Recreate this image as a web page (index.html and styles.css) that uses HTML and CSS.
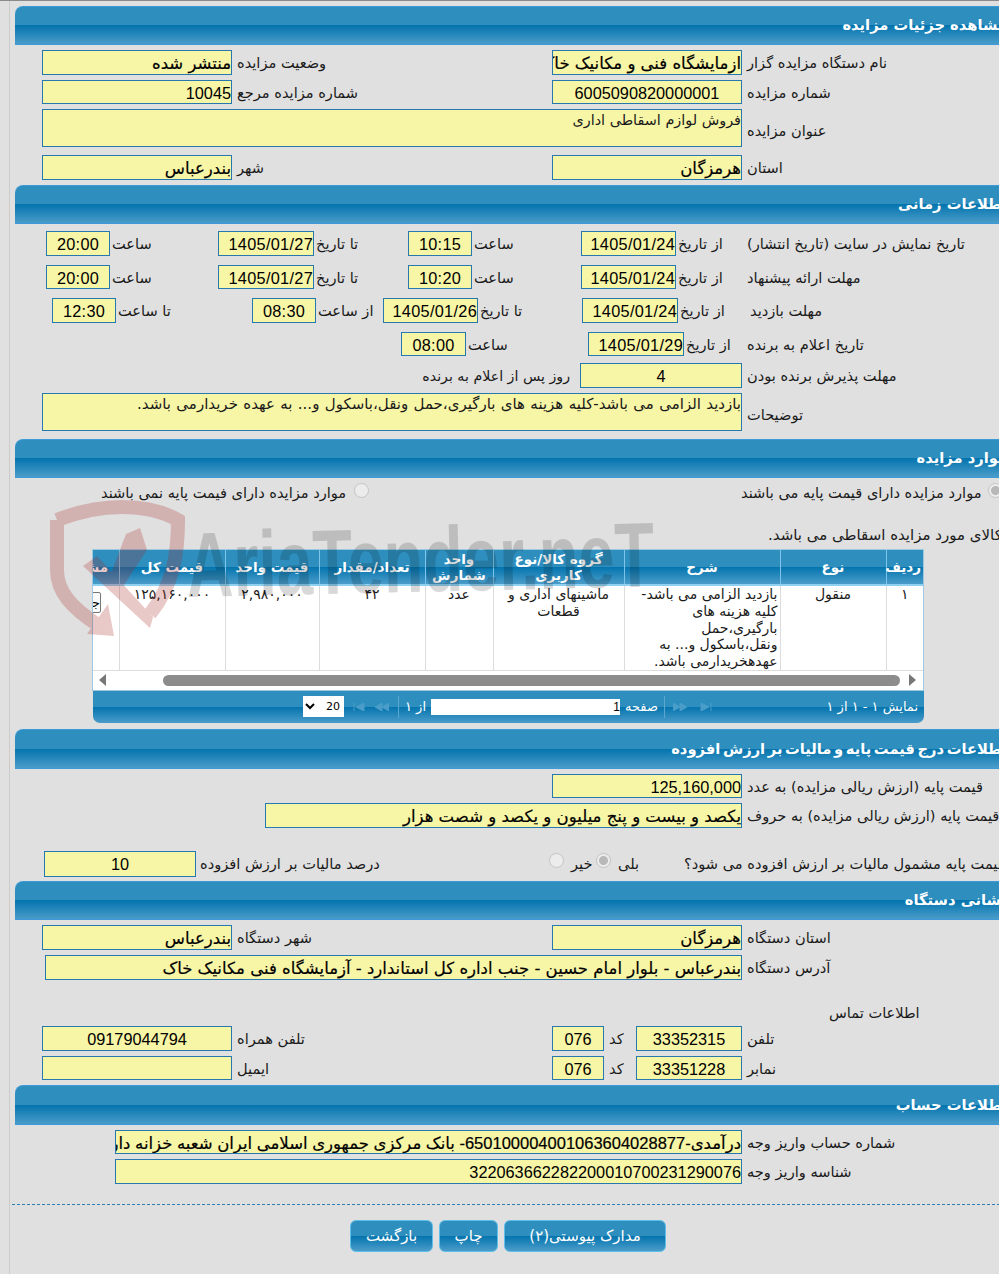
FILE: index.html
```html
<!DOCTYPE html>
<html lang="fa">
<head>
<meta charset="utf-8">
<title>مشاهده جزئیات مزایده</title>
<link rel="stylesheet" href="styles.css">
</head>
<body>
<div class="page">

<section>
  <h2 class="head">مشاهده جزئیات مزایده</h2>
  <div class="row h25 mt5 pair"><div class="fld b">منتشر شده</div><div class="lb">وضعیت مزایده</div><div class="fld b">ازمایشگاه فنی و مکانیک خاک</div><div class="lb">نام دستگاه مزایده گزار</div></div>
  <div class="row h24 mt5 pair"><div class="fld">10045</div><div class="lb">شماره مزایده مرجع</div><div class="fld ctr">6005090820000001</div><div class="lb">شماره مزایده</div></div>
  <div class="row h38 mt5 note"><div class="fld ta">فروش لوازم اسقاطی اداری</div><div class="lb">عنوان مزایده</div></div>
  <div class="row h25 mt8 pair"><div class="fld b">بندرعباس</div><div class="lb">شهر</div><div class="fld b">هرمزگان</div><div class="lb">استان</div></div>
</section>

<section class="mt5">
  <h2 class="head">اطلاعات زمانی</h2>
  <div class="row h25 mt7 time1"><div class="fld ctr dt">20:00</div><div class="lb">ساعت</div><div class="fld dt">1405/01/27</div><div class="lb">تا تاریخ</div><div class="fld ctr dt">10:15</div><div class="lb">ساعت</div><div class="fld dt">1405/01/24</div><div class="lb">از تاریخ</div><div class="lb lb-flush">تاریخ نمایش در سایت (تاریخ انتشار)</div></div>
  <div class="row h24 mt9 time1"><div class="fld ctr dt">20:00</div><div class="lb">ساعت</div><div class="fld dt">1405/01/27</div><div class="lb">تا تاریخ</div><div class="fld ctr dt">10:20</div><div class="lb">ساعت</div><div class="fld dt">1405/01/24</div><div class="lb">از تاریخ</div><div class="lb lb-flush">مهلت ارائه پیشنهاد</div></div>
  <div class="row h25 mt9 time3"><div class="fld ctr dt">12:30</div><div class="lb">تا ساعت</div><div class="fld ctr dt">08:30</div><div class="lb">از ساعت</div><div class="fld dt">1405/01/26</div><div class="lb">تا تاریخ</div><div class="fld dt">1405/01/24</div><div class="lb">از تاریخ</div><div class="lb lb-flush">مهلت بازدید</div></div>
  <div class="row h24 mt9 time4"><div class="fld ctr dt">08:00</div><div class="lb">ساعت</div><div class="fld dt">1405/01/29</div><div class="lb">از تاریخ</div><div class="lb lb-flush">تاریخ اعلام به برنده</div></div>
  <div class="row h25 mt7 days"><div class="lb lb-end">روز پس از اعلام به برنده</div><div class="fld ctr">4</div><div class="lb">مهلت پذیرش برنده بودن</div></div>
  <div class="row h38 mt5 note"><div class="fld ta ws2">بازدید الزامی می باشد-کلیه هزینه های بارگیری،حمل ونقل،باسکول و... به عهده خریدارمی باشد.</div><div class="lb">توضیحات</div></div>
</section>

<section class="mt8">
  <h2 class="head">موارد مزایده</h2>
  <div class="row h20 mt5 choice">
    <div class="opt"><span class="txt w249">موارد مزایده دارای فیمت پایه نمی باشند</span><span class="radio"></span></div>
    <div class="opt"><span class="txt w243">موارد مزایده دارای قیمت پایه می باشند</span><span class="radio on"></span></div>
  </div>
  <p class="goods">کالای مورد مزایده اسقاطی می باشد.</p>
  <div class="grid">
    <div class="clip">
      <table class="tbl">
        <colgroup><col class="c1"><col class="c2"><col class="c3"><col class="c4"><col class="c5"><col class="c2"><col class="c7"><col class="c2"><col class="c9"></colgroup>
        <thead>
          <tr><th>ردیف</th><th>نوع</th><th>شرح</th><th>گروه کالا/نوع کاربری</th><th>واحد شمارش</th><th>تعداد/مقدار</th><th>قیمت واحد</th><th>قیمت کل</th><th>مشاهده</th></tr>
        </thead>
        <tbody>
          <tr>
            <td>۱</td><td>منقول</td>
            <td class="desc">بازدید الزامی می باشد-<br>کلیه هزینه های<br>بارگیری،حمل<br>ونقل،باسکول و... به<br>عهدهخریدارمی باشد.</td>
            <td>ماشینهای اداری و قطعات</td><td>عدد</td><td>۴۲</td><td>۲,۹۸۰,۰۰۰</td><td>۱۲۵,۱۶۰,۰۰۰</td>
            <td><button class="mini" type="button">جزئیات</button></td>
          </tr>
        </tbody>
      </table>
      <div class="scroll"><span class="arr al"></span><span class="thumb"></span><span class="arr ar"></span></div>
    </div>
    <div class="pager">
      <select class="psel"><option>20</option></select>
      <svg class="pico" width="12" height="8" viewBox="0 0 12 8"><path d="M1 0v8M11 0v8L3 4z"/></svg>
      <svg class="pico pico2" width="14" height="8" viewBox="0 0 14 8"><path d="M7 0v8L0 4zM14 0v8L7 4z"/></svg>
      <span class="psep"></span>
      <span class="ptxt pof">از ۱</span>
      <span class="pinp">1</span>
      <span class="ptxt ppage">صفحه</span>
      <span class="psep psep2"></span>
      <svg class="pico pico3" width="14" height="8" viewBox="0 0 14 8"><path d="M0 0v8L7 4zM7 0v8L14 4z"/></svg>
      <svg class="pico pico4" width="12" height="8" viewBox="0 0 12 8"><path d="M1 0v8L9 4zM11 0v8"/></svg>
      <span class="ptxt pshow">نمایش ۱ - ۱ از ۱</span>
    </div>
  </div>
</section>

<section class="mt6">
  <h2 class="head h40 tight">اطلاعات درج قیمت پایه و مالیات بر ارزش افزوده</h2>
  <div class="row h24 mt5 pair"><div></div><div></div><div class="fld">125,160,000</div><div class="lb">قیمت پایه (ارزش ریالی مزایده) به عدد</div></div>
  <div class="row h25 mt5 wide4"><div class="fld b">یکصد و بیست و پنج میلیون و یکصد و شصت هزار</div><div class="lb">قیمت پایه (ارزش ریالی مزایده) به حروف</div></div>
  <div class="row h26 mt23 vat">
    <div class="fld ctr">10</div><div class="lb lb4">درصد مالیات بر ارزش افزوده</div>
    <div class="opt"><span class="radio"></span><span class="txt">خیر</span></div>
    <div class="opt"><span class="radio on"></span><span class="txt">بلی</span></div>
    <div class="lb lb-flush">قیمت پایه مشمول مالیات بر ارزش افزوده می شود؟</div>
  </div>
</section>

<section class="mt4">
  <h2 class="head">نشانی دستگاه</h2>
  <div class="row h25 mt5 pair"><div class="fld b">بندرعباس</div><div class="lb">شهر دستگاه</div><div class="fld b">هرمزگان</div><div class="lb">استان دستگاه</div></div>
  <div class="row h25 mt5 addr"><div class="fld b">بندرعباس - بلوار امام حسین - جنب اداره کل استاندارد - آزمایشگاه فنی مکانیک خاک</div><div class="lb">آدرس دستگاه</div></div>
  <div class="row h20 mt23 contact-title"><div class="lb lb-flush">اطلاعات تماس</div></div>
  <div class="row h25 mt3 contact"><div class="fld ctr">09179044794</div><div class="lb">تلفن همراه</div><div class="fld ctr">076</div><div class="lb">کد</div><div class="fld ctr">33352315</div><div class="lb">تلفن</div></div>
  <div class="row h24 mt5 contact"><div class="fld"></div><div class="lb">ایمیل</div><div class="fld ctr">076</div><div class="lb">کد</div><div class="fld ctr">33351228</div><div class="lb">نمابر</div></div>
</section>

<section class="mt5">
  <h2 class="head h40">اطلاعات حساب</h2>
  <div class="row h24 mt5 acct"><div class="fld b">درآمدی-650100004001063604028877- بانک مرکزی جمهوری اسلامی ایران شعبه خزانه داری کل کشور</div><div class="lb">شماره حساب واریز وجه</div></div>
  <div class="row h25 mt5 acct"><div class="fld">322063662282200010700231290076</div><div class="lb">شناسه واریز وجه</div></div>
</section>

<hr class="dash">

<div class="actions">
  <button class="btn b1" type="button">بازگشت</button>
  <button class="btn b2" type="button">چاپ</button>
  <button class="btn b3" type="button">مدارک پیوستی(۲)</button>
</div>

<svg class="wm" width="620" height="160" viewBox="0 0 620 160" aria-hidden="true">
  <g class="wm-red">
    <path class="wm-line" d="M7 28 C30 19 52 15 72 15 C92 15 112 19 128 28 C128 60 124 92 100 122"/>
    <path class="wm-line" d="M7 28 V78 C7 100 22 116 48 133"/>
    <polygon points="37,142 64,144 58,112"/>
    <polygon points="33,74 47,64 103,125 100,136"/>
    <polygon points="76,42 90,36 97,58 72,96 60,84"/>
  </g>
  <text class="wm-text" x="137" y="105" textLength="468" lengthAdjust="spacingAndGlyphs" transform="rotate(-1.3 137 105)">AriaTender.neT</text>
</svg>

</div>
</body>
</html>
```

FILE: styles.css
```css
* { box-sizing: border-box; }
html, body { margin: 0; padding: 0; }
body {
  background: #e0e0e0;
  border-top: 1px solid #8a8a8a;
  font-family: "DejaVu Sans", sans-serif;
  font-size: 14.6px;
  color: #1a1a1a;
  height: 1274px;
  overflow: hidden;
}
.page {
  position: relative;
  margin-left: 9px;
  width: 1001px;
  height: 1273px;
  border-left: 1px solid #cbcbcb;
  padding-top: 5px;
}
.head {
  margin: 0 0 0 5px;
  height: 39px;
  width: 1000px;
  direction: rtl;
  padding: 0 8px 0 0;
  line-height: 36px;
  font-size: 14.7px;
  font-weight: bold;
  color: #fff;
  white-space: nowrap;
  border-top: 1px solid #3c9ad8;
  border-bottom: 1px solid #3c9ad8;
  border-top-left-radius: 8px;
  background: linear-gradient(#2e8fbf 0, #2e8fbf 50%, #0474ae 50%, #4a9cc9 100%);
}
.h40 { height: 40px; line-height: 37px; }
.tight { word-spacing: -2.5px; }

.mt3 { margin-top: 3px; }
.mt4 { margin-top: 4px; }
.mt5 { margin-top: 5px; }
.mt6 { margin-top: 6px; }
.mt7 { margin-top: 7px; }
.mt8 { margin-top: 8px; }
.mt9 { margin-top: 9px; }
.mt23 { margin-top: 23px; }
.h20 { height: 20px; }
.h24 { height: 24px; }
.h25 { height: 25px; }
.h26 { height: 26px; }
.h38 { height: 38px; }

.row { display: grid; align-items: stretch; }
.pair { padding-left: 32px; grid-template-columns: 190px 320px 190px 1fr; }
.note { padding-left: 32px; grid-template-columns: 700px 1fr; }
.time1 { padding-left: 36px; grid-template-columns: 64px 108px 96px 94px 64px 109px 95px 71px 1fr; }
.time3 { padding-left: 42px; grid-template-columns: 64px 136px 64px 67px 95px 104px 96px 72px 1fr; }
.time4 { padding-left: 391px; grid-template-columns: 65px 122px 96px 63px 1fr; }
.days { padding-left: 412px; grid-template-columns: 158px 162px 1fr; }
.wide4 { padding-left: 255px; grid-template-columns: 477px 1fr; }
.vat { padding-left: 34px; grid-template-columns: 152px 353px 47px 88px 1fr; }
.addr { padding-left: 35px; grid-template-columns: 697px 1fr; }
.contact { padding-left: 32px; grid-template-columns: 190px 320px 52px 32px 106px 1fr; }
.contact-title { padding-left: 819px; grid-template-columns: 1fr; }
.acct { padding-left: 105px; grid-template-columns: 627px 1fr; }
.choice { padding-left: 91px; grid-template-columns: 640px 1fr; }

.fld {
  direction: rtl;
  text-align: right;
  background: #f7f5a6;
  border: 1px solid #2878b0;
  white-space: nowrap;
  overflow: hidden;
  font-family: "Liberation Sans", "DejaVu Sans", sans-serif;
  font-size: 16.3px;
  line-height: 25px;
  color: #000;
}
.ctr { text-align: center; }
.dt { letter-spacing: .3px; }
.b { font-family: "DejaVu Sans", sans-serif; font-size: 16.5px; -webkit-text-stroke: .2px #000; }
.acct .b { font-family: "Liberation Sans", "DejaVu Sans", sans-serif; }
.ta {
  font-family: "DejaVu Sans", sans-serif;
  font-size: 14.4px;
  line-height: 21px;
  white-space: normal;
  color: #1a1a1a;
}
.ws2 { font-size: 15px; word-spacing: .6px; }
.lb {
  direction: rtl;
  text-align: left;
  align-self: center;
  padding-left: 5px;
  white-space: nowrap;
}
.h24 .lb { padding-top: 1px; }
.time1 .lb, .time3 .lb, .time4 .lb { padding-left: 2px; }
.time1 .lb-flush, .time3 .lb-flush, .time4 .lb-flush, .lb-flush { padding-left: 0; }
.lb-end { text-align: right; padding: 0 10px 0 0; font-size: 14.2px; }
.lb4 { padding-left: 4px; }
.note .lb { padding-top: 5px; }

.opt { display: flex; align-items: center; }
.txt { direction: rtl; white-space: nowrap; text-align: left; }
.choice .txt { margin-top: -2px; }
.w249 { width: 249px; }
.w243 { width: 243px; }
.radio {
  flex: none;
  width: 15px;
  height: 15px;
  margin: -6px 0 0 4px;
  border-radius: 50%;
  background: #ececec;
  border: 1px solid #c4c4c4;
}
.radio.on { background: radial-gradient(circle, #b8b8b8 0 4px, #ececec 5px); }
.vat .radio { margin-left: 0; margin-right: 7px; }

.goods {
  margin: 22px 0 0;
  padding-left: 758px;
  height: 20px;
  line-height: 20px;
  font-size: 15px;
  white-space: nowrap;
  direction: rtl;
  text-align: left;
}

.grid { margin: 4px 0 0 82px; width: 832px; }
.clip {
  direction: rtl;
  width: 832px;
  overflow: hidden;
  border: 1px solid #9cc8e0;
  background: #fff;
}
.tbl {
  table-layout: fixed;
  border-collapse: collapse;
  width: 878px;
  direction: rtl;
}
.c1 { width: 37px; }
.c2 { width: 106px; }
.c3 { width: 156px; }
.c4 { width: 131px; }
.c5 { width: 68px; }
.c7 { width: 94px; }
.c9 { width: 74px; }
.tbl th {
  height: 35px;
  padding: 0 2px 1px;
  font-size: 13.5px;
  line-height: 16px;
  font-weight: bold;
  color: #fff;
  text-align: center;
  border-left: 1px solid #7cc4ea;
  border-bottom: 2px solid #8fd0f0;
  background: linear-gradient(#2e8fbf 0, #2e8fbf 50%, #0474ae 50%, #4a9cc9 100%);
}
.tbl td {
  height: 85px;
  padding: 0 2px;
  vertical-align: top;
  text-align: center;
  font-size: 14px;
  line-height: 16.8px;
  border-left: 1px solid #dcdcdc;
  border-bottom: 1px solid #dcdcdc;
  color: #1a1a1a;
}
.tbl td.desc { text-align: right; white-space: nowrap; }
.mini {
  width: 38px;
  height: 21px;
  margin-top: 6px;
  padding: 0;
  border: 1px solid #777;
  border-radius: 2px;
  background: #fafafa;
  font: 13px "DejaVu Sans", sans-serif;
  overflow: hidden;
}
.scroll {
  display: flex;
  direction: ltr;
  align-items: center;
  height: 19px;
  padding-left: 6px;
  background: #fff;
}
.thumb { width: 737px; height: 11px; margin: 0 9px 0 57px; background: #8c8c8c; border-radius: 6px; }
.arr { width: 0; height: 0; border-top: 6px solid transparent; border-bottom: 6px solid transparent; }
.al { border-right: 7px solid #777; }
.ar { border-left: 7px solid #777; }

.pager {
  display: flex;
  align-items: center;
  direction: ltr;
  margin-left: 1px;
  height: 32px;
  background: linear-gradient(#2e8fbf 0, #2e8fbf 50%, #0474ae 50%, #4a9cc9 100%);
  border-radius: 0 0 7px 7px;
  color: #fff;
  font-size: 13px;
  padding-left: 210px;
}
.psel {
  width: 41px;
  height: 21px;
  border: 0;
  background: #fff;
  font: 11px "DejaVu Sans", sans-serif;
  direction: rtl;
  padding: 0;
}
.pico { fill: #4a9dc8; stroke: #4a9dc8; margin-left: 9px; flex: none; }
.pico2 { margin-left: 10px; }
.psep { width: 1px; height: 22px; background: #5aa8cf; margin-left: 9px; flex: none; }
.pof { margin-left: 7px; width: 20px; direction: rtl; white-space: nowrap; }
.pinp {
  margin-left: 5px;
  width: 189px;
  height: 16px;
  background: #fff;
  color: #000;
  text-align: right;
  font: 12px/16px "Liberation Sans", sans-serif;
}
.ppage { margin-left: 5px; width: 35px; direction: rtl; text-align: left; }
.psep2 { margin-left: 4px; }
.pico3 { margin-left: 8px; }
.pico4 { margin-left: 13px; }
.pshow { margin-left: auto; margin-right: 6px; direction: rtl; white-space: nowrap; }

.dash {
  margin: 20px 0 0 2px;
  border: 0;
  border-top: 1px dashed #2a80b0;
  height: 0;
}
.actions { display: flex; gap: 6px; margin: 15px 0 0 340px; }
.btn {
  height: 32px;
  padding: 0;
  border: 1px solid #5fbdea;
  border-radius: 6px;
  color: #fff;
  font: 15px "DejaVu Sans", sans-serif;
  direction: rtl;
  background: linear-gradient(#2e8fbf 0, #2e8fbf 50%, #0474ae 50%, #4a9cc9 100%);
}
.b1 { width: 83px; }
.b2 { width: 59px; }
.b3 { width: 162px; }

.wm { position: absolute; left: 40px; top: 491px; pointer-events: none; }
.wm-red { fill: #a82020; opacity: .24; }
.wm-line { fill: none; stroke: #a82020; stroke-width: 14; }
.wm-text { font: bold 92px "Liberation Sans", sans-serif; fill: #000; opacity: .15; }
```
